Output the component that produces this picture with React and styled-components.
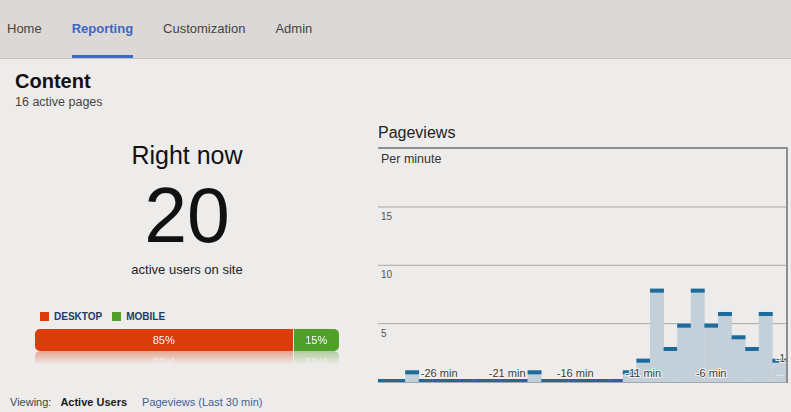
import styled, { createGlobalStyle } from "styled-components";

const GlobalStyle = createGlobalStyle`
  html, body {
    margin: 0;
    padding: 0;
    overflow: hidden;
    background: #eeecea;
    font-family: "Liberation Sans", Arial, sans-serif;
  }
`;

const tabs = ["Home", "Reporting", "Customization", "Admin"];
const perMinute = [
  0, 0, 1, 0, 0, 0, 0, 0, 0, 0, 0, 1, 0, 0, 0, 0, 0, 0, 1, 2, 8, 3, 5, 8, 5, 6, 4, 3, 6, 2,
];
const timeLabels = [
  { at: 4, text: "-26 min" },
  { at: 9, text: "-21 min" },
  { at: 14, text: "-16 min" },
  { at: 19, text: "-11 min" },
  { at: 24, text: "-6 min" },
];

const CHART_W = 408;
const CHART_H = 234;
const BASE = 233;
const UNIT = 11.67;
const BAR_W = CHART_W / perMinute.length;

const Page = styled.div`
  width: 791px;
  height: 412px;
  overflow: hidden;
`;

const Nav = styled.nav`
  display: flex;
  gap: 30px;
  height: 59px;
  box-sizing: border-box;
  padding-left: 7px;
  background: #dbd8d5;
  border-bottom: 1px solid #c5c2bf;
`;

const Tab = styled.a`
  position: relative;
  display: flex;
  align-items: center;
  padding-bottom: 1px;
  font-size: 13px;
  font-weight: ${({ $active }) => ($active ? "bold" : "normal")};
  color: ${({ $active }) => ($active ? "#3c67c5" : "#444")};

  &::after {
    content: "";
    display: ${({ $active }) => ($active ? "block" : "none")};
    position: absolute;
    left: 0;
    right: 0;
    bottom: 0;
    height: 3px;
    background: #3c67c5;
  }
`;

const Header = styled.header`
  padding: 10px 15px 0;
`;

const Title = styled.h1`
  margin: 0;
  font-size: 20px;
  line-height: 24px;
  font-weight: bold;
  color: #111;
`;

const Subtitle = styled.div`
  margin-top: 1px;
  font-size: 12.5px;
  line-height: 16px;
  color: #444;
`;

const Body = styled.div`
  display: flex;
  gap: 4px;
  padding-top: 13px;
`;

const LeftColumn = styled.section`
  width: 374px;
  display: flex;
  flex-direction: column;
  align-items: center;
  padding-top: 17px;
`;

const RightNow = styled.div`
  font-size: 25px;
  line-height: 30px;
  color: #111;
`;

const BigNumber = styled.div`
  margin-top: 7px;
  font-size: 77px;
  line-height: 77px;
  color: #111;
`;

const ActiveLabel = styled.div`
  margin-top: 8px;
  font-size: 13px;
  line-height: 15px;
  color: #222;
`;

const Legend = styled.div`
  display: flex;
  align-items: center;
  width: 304px;
  box-sizing: border-box;
  padding-left: 5px;
  margin-top: 33px;
  height: 12px;
`;

const LegendItem = styled.span`
  display: flex;
  align-items: center;
  gap: 5px;
  margin-right: 10px;
  font-size: 10px;
  font-weight: bold;
  color: #1d3b6a;

  &::before {
    content: "";
    width: 9px;
    height: 9px;
    background: ${({ $color }) => $color};
  }
`;

const SplitBar = styled.div`
  display: flex;
  width: 304px;
  height: 22px;
  margin-top: 7px;
  border-radius: 5px;
  overflow: hidden;
  -webkit-box-reflect: below 0 linear-gradient(transparent 38%, rgba(0, 0, 0, 0.4));
`;

const Segment = styled.div`
  display: flex;
  align-items: center;
  justify-content: center;
  background: ${({ $color }) => $color};
  color: #fff;
  font-size: 11px;
  & + & {
    border-left: 1px solid #f3e6c8;
  }
`;

const RightColumn = styled.section`
  width: 410px;
`;

const ChartTitle = styled.h2`
  margin: 0 0 5px;
  font-size: 16px;
  line-height: 19px;
  font-weight: normal;
  color: #222;
`;

const ChartBox = styled.div`
  position: relative;
  width: 410px;
  height: 236px;
  box-sizing: border-box;
  border-top: 2px solid #8e8e8e;
  border-right: 2px solid #8e8e8e;

  svg {
    display: block;
  }
`;

const PerMinute = styled.span`
  position: absolute;
  top: 3px;
  left: 3px;
  font-size: 12.5px;
  line-height: 15px;
  color: #333;
`;

const Footer = styled.div`
  display: flex;
  align-items: center;
  margin-top: 12px;
  padding-left: 10px;
  font-size: 11px;
  line-height: 14px;
  color: #444;
`;

const Viewing = styled.span`
  margin-right: 9px;
`;

const ViewOption = styled.span`
  margin-right: 15px;
  font-weight: ${({ $active }) => ($active ? "bold" : "normal")};
  color: ${({ $active }) => ($active ? "#1a1a1a" : "#3f5f9a")};
`;

const PageviewsChart = () => (
  <svg width={CHART_W} height={CHART_H} viewBox={`0 0 ${CHART_W} ${CHART_H}`}>
    {[15, 10, 5].map((v) => (
      <g key={v}>
        <line x1="0" x2={CHART_W} y1={BASE - v * UNIT} y2={BASE - v * UNIT} stroke="#a9a7a5" strokeWidth="1" />
        <text x="3" y={BASE - v * UNIT + 13} fontSize="10" fill="#555" fontFamily="Liberation Sans, Arial, sans-serif">
          {v}
        </text>
      </g>
    ))}
    <line x1="0" x2={CHART_W} y1={BASE + 0.5} y2={BASE + 0.5} stroke="#a9a7a5" strokeWidth="1" />
    {perMinute.map((v, i) => {
      const x = i * BAR_W;
      if (v === 0) {
        return <rect key={i} x={x} y={BASE - 3} width={BAR_W + 0.3} height="3" fill="#1c6b9d" />;
      }
      const top = BASE - v * UNIT;
      return (
        <g key={i}>
          <rect x={x} y={top} width={BAR_W + 0.3} height={BASE - top} fill="#c3d0da" />
          <rect x={x} y={top} width={BAR_W + 0.3} height="4" fill="#1c6b9d" />
        </g>
      );
    })}
    {timeLabels.map((l) => (
      <text
        key={l.text}
        x={(l.at + 0.5) * BAR_W}
        y="227.5"
        textAnchor="middle"
        fontSize="11"
        fill="#3a3a3a"
        stroke="#f2f2f2"
        strokeWidth="2"
        paintOrder="stroke"
        fontFamily="Liberation Sans, Arial, sans-serif"
      >
        {l.text}
      </text>
    ))}
    <text x="407" y="213" textAnchor="end" fontSize="10" fill="#3a3a3a" stroke="#f2f2f2" strokeWidth="2" paintOrder="stroke" fontFamily="Liberation Sans, Arial, sans-serif">
      -1
    </text>
    <text x="406" y="227" textAnchor="end" fontSize="10" fill="#fff" fontFamily="Liberation Sans, Arial, sans-serif">
      ...
    </text>
  </svg>
);

const App = () => {
  return (
    <Page>
      <GlobalStyle />
      <Nav>
        {tabs.map((t) => (
          <Tab key={t} $active={t === "Reporting"}>
            {t}
          </Tab>
        ))}
      </Nav>
      <Header>
        <Title>Content</Title>
        <Subtitle>16 active pages</Subtitle>
      </Header>
      <Body>
        <LeftColumn>
          <RightNow>Right now</RightNow>
          <BigNumber>20</BigNumber>
          <ActiveLabel>active users on site</ActiveLabel>
          <Legend>
            <LegendItem $color="#dc3b0b">DESKTOP</LegendItem>
            <LegendItem $color="#4f9f28">MOBILE</LegendItem>
          </Legend>
          <SplitBar>
            <Segment $color="#dc3b0b" style={{ width: "85%" }}>85%</Segment>
            <Segment $color="#4f9f28" style={{ width: "15%" }}>15%</Segment>
          </SplitBar>
        </LeftColumn>
        <RightColumn>
          <ChartTitle>Pageviews</ChartTitle>
          <ChartBox>
            <PageviewsChart />
            <PerMinute>Per minute</PerMinute>
          </ChartBox>
        </RightColumn>
      </Body>
      <Footer>
        <Viewing>Viewing:</Viewing>
        <ViewOption $active>Active Users</ViewOption>
        <ViewOption>Pageviews (Last 30 min)</ViewOption>
      </Footer>
    </Page>
  );
};

export default App;
